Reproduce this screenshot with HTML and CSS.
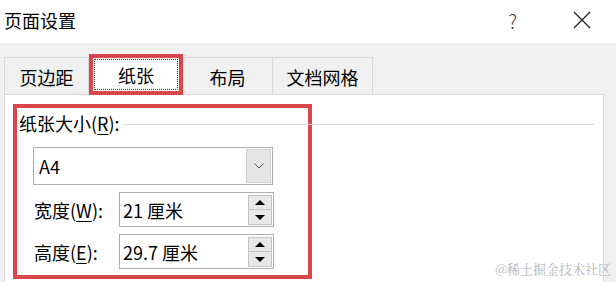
FILE: index.html
```html
<!DOCTYPE html>
<html>
<head lang="zh">
    <meta charset="UTF-8">
    <title>页面设置</title>
    <link rel="stylesheet" href="styles.css">
</head>
<body>
    <div class="titlebar">
        <span class="title">页面设置</span>
        <span class="help">?</span>
        <svg class="close" width="18" height="18" viewBox="0 0 18 18">
            <path d="M1 1L17 17M17 1L1 17" stroke="#222" stroke-width="1.3" fill="none"/>
        </svg>
    </div>

    <div class="tabs">
        <div class="tab tab-first">页边距</div>
        <div class="tab tab-active"><span class="focus">纸张</span></div>
        <div class="tab tab-third">布局</div>
        <div class="tab">文档网格</div>
    </div>

    <div class="panel">
        <div class="group">
            <div class="group-head">
                <span>纸张大小(<u>R</u>):</span>
                <i class="rule"></i>
            </div>
            <div class="fields">
                <div class="select">
                    <span>A4</span>
                    <span class="select-btn">
                        <svg width="10" height="6" viewBox="0 0 10 6">
                            <path d="M0.5 0.5L5 5L9.5 0.5" stroke="#555" stroke-width="1" fill="none"/>
                        </svg>
                    </span>
                </div>
                <div class="row">
                    <label>宽度(<u>W</u>):</label>
                    <div class="spin">
                        <span>21 厘米</span>
                        <span class="spin-btns">
                            <b class="up"></b>
                            <b class="down"></b>
                        </span>
                    </div>
                </div>
                <div class="row">
                    <label>高度(<u>E</u>):</label>
                    <div class="spin">
                        <span>29.7 厘米</span>
                        <span class="spin-btns">
                            <b class="up"></b>
                            <b class="down"></b>
                        </span>
                    </div>
                </div>
            </div>
        </div>
    </div>

    <div class="mark">@稀土掘金技术社区</div>
</body>
</html>
```

FILE: styles.css
```css
body{
    margin: 0;
    background-color: #f0f0f0;
    font-family: "Noto Sans CJK SC", sans-serif;
    font-size: 18px;
    color: #000;
    position: relative;
    height: 282px;
    overflow: hidden;
}
u{
    text-decoration-thickness: 1px;
    text-underline-offset: 3px;
}

/*---------- 标题栏 ----------*/
.titlebar{
    height: 43px;
    background-color: #fff;
    display: flex;
    align-items: center;
    padding-left: 4px;
}
.title{
    flex: 1;
    margin-top: -4px;
}
.help{
    font-size: 19px;
    font-weight: 300;
    color: #333;
    margin-right: 56px;
    margin-top: -3px;
}
.close{
    margin-right: 25px;
    margin-top: -3px;
}

/*---------- 选项卡 ----------*/
.tabs{
    display: flex;
    align-items: flex-end;
    padding-left: 4px;
    margin-top: 14px;
    height: 37px;
}
.tab{
    box-sizing: border-box;
    height: 37px;
    line-height: 38px;
    text-align: center;
    border: 1px solid #d9d9d9;
    border-left: none;
    border-bottom: none;
}
.tab-first{
    width: 85px;
    border-left: 1px solid #d9d9d9;
}
.tab-active{
    width: 94px;
    height: 41px;
    margin-bottom: -1px;
    border: 4px solid #d9474d;
    background-color: #fff;
    position: relative;
    z-index: 1;
    padding: 1px;
}
.focus{
    display: block;
    height: 100%;
    box-sizing: border-box;
    border: 1px dotted #333;
    line-height: 30px;
}
.tab-third{
    width: 90px;
}
.tab:last-child{
    width: 100px;
}

/*---------- 面板 ----------*/
.panel{
    margin: 0 12px 0 4px;
    height: 200px;
    background-color: #fff;
    border: 1px solid #d9d9d9;
    padding: 9px 0 0 8px;
    box-sizing: border-box;
}
.group{
    width: 299px;
    box-sizing: border-box;
    border: 4px solid #d9474d;
    padding: 0 0 6px 0;
}
.group-head{
    width: 575px;
    height: 30px;
    display: flex;
    align-items: center;
    padding-left: 2px;
}
.rule{
    flex: 1;
    height: 1px;
    background-color: #dcdcdc;
    margin: 2px 0 0 3px;
}
.fields{
    padding-left: 16px;
}

/*---------- 下拉框 ----------*/
.select{
    width: 240px;
    height: 38px;
    box-sizing: border-box;
    margin-top: 9px;
    border: 1px solid #adadad;
    display: flex;
    align-items: center;
    justify-content: space-between;
    padding: 0 1px 0 5px;
}
.select-btn{
    width: 25px;
    height: 34px;
    box-sizing: border-box;
    background-color: #e5e5e5;
    border: 1px solid #cfcfcf;
    display: flex;
    align-items: center;
    justify-content: center;
}

/*---------- 宽度 / 高度 ----------*/
.row{
    display: flex;
    align-items: center;
    margin-top: 7px;
}
.row label{
    width: 85px;
    padding-left: 1px;
}
.spin{
    width: 155px;
    height: 35px;
    box-sizing: border-box;
    border: 1px solid #adadad;
    display: flex;
    align-items: center;
    justify-content: space-between;
    padding: 0 1px 0 3px;
}
.spin-btns{
    display: flex;
    flex-direction: column;
    width: 24px;
    margin-top: 1px;
}
.spin-btns b{
    height: 15px;
    box-sizing: border-box;
    border: 1px solid #c4c4c4;
    background-color: #e8e8e8;
    display: flex;
    align-items: center;
    justify-content: center;
}
.spin-btns .down{
    border-top: none;
}
.up::after{
    content: "";
    border-left: 5px solid transparent;
    border-right: 5px solid transparent;
    border-bottom: 5px solid #000;
}
.down::after{
    content: "";
    border-left: 5px solid transparent;
    border-right: 5px solid transparent;
    border-top: 5px solid #000;
}

/*---------- 水印 ----------*/
.mark{
    position: absolute;
    right: 5px;
    bottom: 4px;
    font-size: 13px;
    color: #b5b5b5;
    font-family: "Noto Serif CJK SC", "Noto Sans CJK SC", serif;
}
```
